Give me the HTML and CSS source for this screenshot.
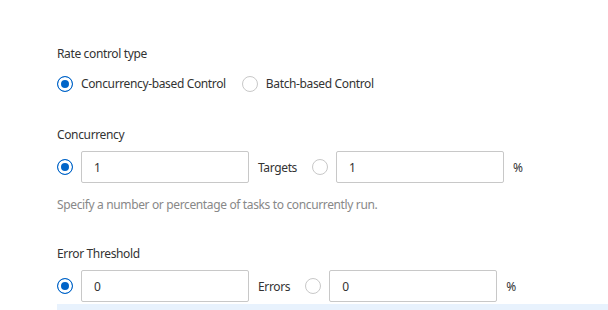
FILE: index.html
```html
<!DOCTYPE html>
<html lang="en">
<head>
  <meta charset="UTF-8">
  <title>Rate control</title>
  <link rel="stylesheet" href="styles.css">
</head>
<body>

  <form class="settings">
    <div class="field">
      <div class="label">Rate control type</div>
      <div class="choice-row">
        <label class="choice"><span class="radio checked"></span>Concurrency-based Control</label>
        <label class="choice"><span class="radio"></span>Batch-based Control</label>
      </div>
    </div>

    <div class="field">
      <div class="label">Concurrency</div>
      <div class="input-row">
        <span class="radio checked"></span>
        <input class="text" type="text" value="1">
        <span class="unit">Targets</span>
        <span class="radio"></span>
        <input class="text" type="text" value="1">
        <span class="pct">%</span>
      </div>
      <div class="help">Specify a number or percentage of tasks to concurrently run.</div>
    </div>

    <div class="field">
      <div class="label">Error Threshold</div>
      <div class="input-row">
        <span class="radio checked"></span>
        <input class="text" type="text" value="0">
        <span class="unit">Errors</span>
        <span class="radio"></span>
        <input class="text" type="text" value="0">
        <span class="pct">%</span>
      </div>
    </div>

    <div class="notice"></div>
  </form>

</body>
</html>
```

FILE: styles.css
```css
body {
  margin: 0;
  background-color: #fff;
  font-family: "Noto Sans", Arial, sans-serif;
  font-size: 12px;
  letter-spacing: -0.36px;
  color: #333;
}
.settings {
  padding: 45px 0 0 57px;
}
.field + .field {
  margin-top: 32px;
}
.label {
  line-height: 18px;
  margin-bottom: 7px;
}
.choice-row {
  display: flex;
  align-items: center;
  gap: 16px;
  padding-top: 4px;
  line-height: 20px;
}
.choice {
  display: flex;
  align-items: center;
  gap: 8px;
}
.radio {
  box-sizing: border-box;
  width: 16px;
  height: 16px;
  flex: none;
  border: 1px solid #c8c8c8;
  border-radius: 50%;
  background: #fff;
}
.radio.checked {
  border-color: #0064c8;
  background: #0064c8;
  box-shadow: inset 0 0 0 3px #fff;
}
.input-row {
  display: flex;
  align-items: center;
  height: 32px;
}
.text {
  box-sizing: border-box;
  width: 168px;
  height: 32px;
  margin-left: 8px;
  padding: 0 12px;
  border: 1px solid #c8c8c8;
  border-radius: 2px;
  font: inherit;
  color: #333;
}
.unit {
  margin: 0 15px 0 9px;
}
.pct {
  margin-left: 9px;
}
.help {
  margin-top: 13px;
  line-height: 18px;
  color: #888;
}
.field:nth-child(3) {
  margin-top: 31px;
}
.notice {
  margin-top: 2px;
  height: 6px;
  background-color: #e8f2fd;
}
```
